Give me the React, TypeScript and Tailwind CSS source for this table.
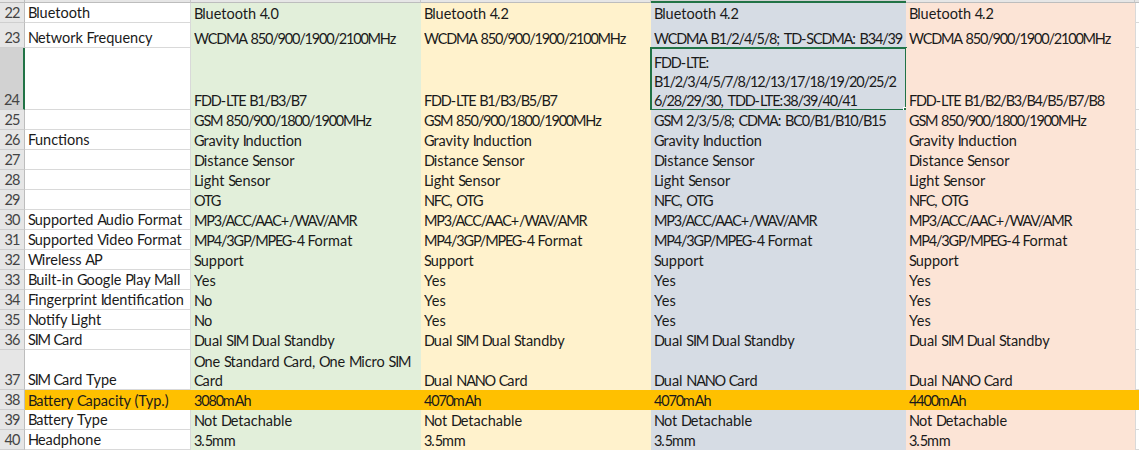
import React from "react";

function T({ s }: { s: string }) {
  const parts = s.split(/([0-9A-Z/]+)/);
  return (
    <>
      {parts.map((p, i) =>
        /^[0-9A-Z/]+$/.test(p) ? (
          <span key={i} className="tracking-[-1.2px]">
            {p}
          </span>
        ) : (
          <React.Fragment key={i}>{p}</React.Fragment>
        )
      )}
    </>
  );
}

function Lines({ lines }: { lines: string[] }) {
  return (
    <>
      {lines.map((l, i) => (
        <div key={i}>
          <T s={l} />
        </div>
      ))}
    </>
  );
}

type Row = { n: number; h: number; label: string; vals: string[][]; orange?: boolean };

const same = (s: string) => [[s], [s], [s], [s]];

const rows: Row[] = [
  { n: 22, h: 20, label: "Bluetooth", vals: [["Bluetooth 4.0"], ["Bluetooth 4.2"], ["Bluetooth 4.2"], ["Bluetooth 4.2"]] },
  {
    n: 23,
    h: 25,
    label: "Network Frequency",
    vals: [["WCDMA 850/900/1900/2100MHz"], ["WCDMA 850/900/1900/2100MHz"], ["WCDMA B1/2/4/5/8; TD-SCDMA: B34/39"], ["WCDMA 850/900/1900/2100MHz"]],
  },
  {
    n: 24,
    h: 62,
    label: "",
    vals: [
      ["FDD-LTE B1/B3/B7"],
      ["FDD-LTE B1/B3/B5/B7"],
      ["FDD-LTE:", "B1/2/3/4/5/7/8/12/13/17/18/19/20/25/2", "6/28/29/30, TDD-LTE:38/39/40/41"],
      ["FDD-LTE B1/B2/B3/B4/B5/B7/B8"],
    ],
  },
  {
    n: 25,
    h: 20,
    label: "",
    vals: [["GSM 850/900/1800/1900MHz"], ["GSM 850/900/1800/1900MHz"], ["GSM 2/3/5/8; CDMA: BC0/B1/B10/B15"], ["GSM 850/900/1800/1900MHz"]],
  },
  { n: 26, h: 20, label: "Functions", vals: same("Gravity Induction") },
  { n: 27, h: 20, label: "", vals: same("Distance Sensor") },
  { n: 28, h: 20, label: "", vals: same("Light Sensor") },
  { n: 29, h: 20, label: "", vals: [["OTG"], ["NFC, OTG"], ["NFC, OTG"], ["NFC, OTG"]] },
  { n: 30, h: 20, label: "Supported Audio Format", vals: same("MP3/ACC/AAC+/WAV/AMR") },
  { n: 31, h: 20, label: "Supported Video Format", vals: same("MP4/3GP/MPEG-4 Format") },
  { n: 32, h: 20, label: "Wireless AP", vals: same("Support") },
  { n: 33, h: 20, label: "Built-in Google Play Mall", vals: same("Yes") },
  { n: 34, h: 20, label: "Fingerprint Identification", vals: [["No"], ["Yes"], ["Yes"], ["Yes"]] },
  { n: 35, h: 20, label: "Notify Light", vals: [["No"], ["Yes"], ["Yes"], ["Yes"]] },
  { n: 36, h: 20, label: "SIM Card", vals: same("Dual SIM Dual Standby") },
  {
    n: 37,
    h: 40,
    label: "SIM Card Type",
    vals: [["One Standard Card, One Micro SIM", "Card"], ["Dual NANO Card"], ["Dual NANO Card"], ["Dual NANO Card"]],
  },
  { n: 38, h: 20, label: "Battery Capacity (Typ.)", vals: [["3080mAh"], ["4070mAh"], ["4070mAh"], ["4400mAh"]], orange: true },
  { n: 39, h: 20, label: "Battery Type", vals: same("Not Detachable") },
  { n: 40, h: 20, label: "Headphone", vals: same("3.5mm") },
];

const colBg = ["bg-[#e2efda]", "bg-[#fff2cc]", "bg-[#d6dce4]", "bg-[#fce4d6]"];
const colW = ["w-[230px]", "w-[230px]", "w-[255px]", "w-[229px]"];

export default function App() {
  return (
    <div
      className="w-[1139px] h-[451px] overflow-hidden bg-white text-[14.5px] text-[#1a1a1a]"
      style={{ fontFamily: "Lato, 'Open Sans', sans-serif" }}
    >
      {/* column header strip */}
      <div className="flex h-[3px]">
        <div className="w-[25px] shrink-0 bg-[#e6e6e6] border-r border-[#bdbdbd] border-b border-b-[#bdbdbd]" />
        <div className="w-[166px] shrink-0 bg-[#e6e6e6] border-r border-[#c8c8c8] border-b border-b-[#bdbdbd]" />
        <div className="w-[230px] shrink-0 bg-[#e6e6e6] border-r border-[#c8c8c8] border-b border-b-[#bdbdbd]" />
        <div className="w-[230px] shrink-0 bg-[#e6e6e6] border-r border-[#c8c8c8] border-b border-b-[#bdbdbd]" />
        <div className="w-[255px] shrink-0 bg-[#d2d2d2] border-b-2 border-[#217346]" />
        <div className="w-[229px] shrink-0 bg-[#e6e6e6] border-r border-[#c8c8c8] border-b border-b-[#bdbdbd]" />
        <div className="flex-1 bg-[#e6e6e6] border-b border-[#bdbdbd]" />
      </div>
      {rows.map((r) => {
        const sel = r.n === 24;
        return (
          <div key={r.n} className="flex" style={{ height: r.h }}>
            <div
              className={`w-[25px] shrink-0 flex items-end justify-center leading-[19px] text-[14.5px] text-[#444] border-b border-[#cfcfcf] ${
                sel ? "bg-[#d2d2d2] border-r-2 border-r-[#217346]" : "bg-[#e6e6e6] border-r border-r-[#bdbdbd]"
              }`}
            >
              <span className="tracking-[-1px]">{r.n}</span>
            </div>
            <div
              className={`w-[166px] shrink-0 flex items-end pl-[3px] leading-[19px] whitespace-nowrap overflow-hidden ${
                r.orange ? "bg-[#ffc000]" : "bg-white border-b border-r border-[#d9d9d9]"
              }`}
            >
              <div>
                <T s={r.label} />
              </div>
            </div>
            {r.vals.map((v, i) => (
              <div
                key={i}
                className={`${colW[i]} shrink-0 relative flex items-end pl-[3px] leading-[19px] whitespace-nowrap ${
                  r.orange ? "bg-[#ffc000]" : colBg[i]
                }`}
              >
                <div className="overflow-hidden w-full">
                  <Lines lines={v} />
                </div>
                {sel && i === 2 && (
                  <div className="absolute -left-[1px] -top-[1px] -right-[1px] -bottom-[1px] border-2 border-[#217346]">
                    <div className="absolute -right-[4px] -bottom-[4px] w-[6px] h-[6px] bg-[#217346] border border-white" />
                  </div>
                )}
              </div>
            ))}
            <div className={`flex-1 ${r.orange ? "bg-[#ffc000]" : "bg-white border-b border-l border-[#d9d9d9]"}`} />
          </div>
        );
      })}
    </div>
  );
}
